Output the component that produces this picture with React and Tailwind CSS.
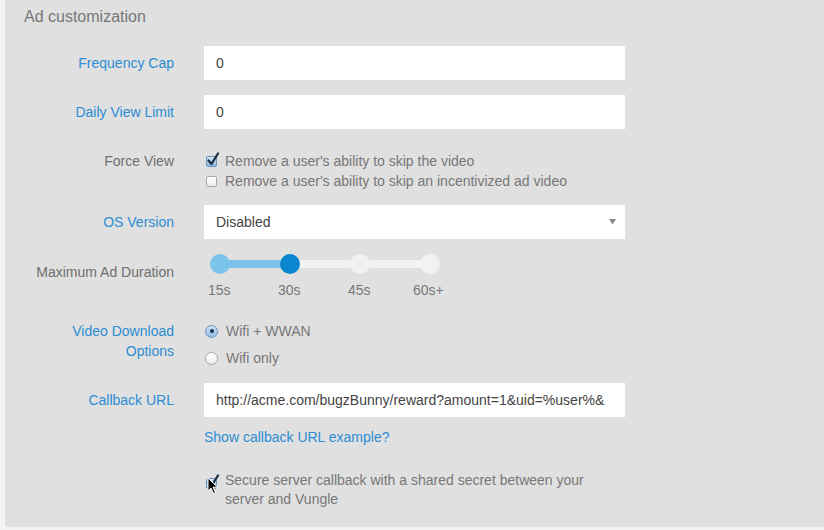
import { useState } from "react";

const font = "font-['Liberation_Sans',Arial,sans-serif]";

function Label({ children, blue, className = "" }) {
  return (
    <div
      className={`w-[169px] shrink-0 text-right text-[14px] leading-[20px] ${
        blue ? "text-[#2b8dd3]" : "text-[#6f6f6f]"
      } ${className}`}
    >
      {children}
    </div>
  );
}

function TextInput({ value }) {
  return (
    <div className="w-[421px] h-[34px] bg-white flex items-center px-3 text-[14px] text-[#444]">
      <span className="block w-full whitespace-nowrap">{value}</span>
    </div>
  );
}

function CheckBox({ checked }) {
  return (
    <span className="relative inline-block w-[11px] h-[11px] mr-[8px] shrink-0">
      <span
        className={`absolute inset-0 rounded-[2px] border ${
          checked
            ? "border-[#6d94bd] bg-gradient-to-b from-[#d3e6f8] to-[#8db8e6]"
            : "border-[#a9a9a9] bg-gradient-to-b from-white to-[#ececec]"
        }`}
      />
      {checked && (
        <svg className="absolute left-[1px] top-[-4px]" width="13" height="14" viewBox="0 0 13 14">
          <path d="M1.5 8.5 L4.5 12 L11 1.5" fill="none" stroke="#1d2c3f" strokeWidth="2.2" strokeLinecap="round" strokeLinejoin="round" />
        </svg>
      )}
    </span>
  );
}

function Radio({ checked }) {
  return (
    <span
      className={`inline-flex items-center justify-center w-[13px] h-[13px] rounded-full border mr-[8px] shrink-0 ${
        checked
          ? "border-[#6d94bd] bg-gradient-to-b from-[#cfe3f7] to-[#8db8e6]"
          : "border-[#a9a9a9] bg-gradient-to-b from-white to-[#ececec]"
      }`}
    >
      {checked && <span className="w-[4px] h-[4px] rounded-full bg-[#1d2c3f]" />}
    </span>
  );
}

function Slider() {
  const steps = ["15s", "30s", "45s", "60s+"];
  const value = 1;
  return (
    <div className="w-[240px]">
      <div className="relative h-[20px] ml-[6px] w-[230px]">
        <div className="absolute left-[10px] right-[10px] top-[6px] h-[8px] bg-[#f2f2f2]" />
        <div className="absolute left-[10px] top-[6px] h-[8px] w-[69px] bg-[#7cc3ea]" />
        <div className="absolute inset-0 flex justify-between">
          {steps.map((s, i) => (
            <span
              key={s}
              className={`w-[20px] h-[20px] rounded-full ${
                i === value ? "bg-[#0a86cf]" : i < value ? "bg-[#7cc3ea]" : "bg-[#f2f2f2]"
              }`}
            />
          ))}
        </div>
      </div>
      <div className="flex mt-[6px] pl-[4px] text-[14px] leading-[20px] text-[#777]">
        <span className="w-[70px]">15s</span>
        <span className="w-[70px]">30s</span>
        <span className="w-[65px]">45s</span>
        <span>60s+</span>
      </div>
    </div>
  );
}

export default function App() {
  const [secure] = useState(true);

  return (
    <div className={`w-[824px] h-[530px] bg-[#f3f3f3] overflow-hidden ${font}`}>
      <div className="ml-[5px] h-[527px] bg-[#e0e0e0] pt-[7px]">
        <h2 className="pl-[19px] text-[16px] leading-[20px] text-[#777]">
          Ad customization
        </h2>

        <div className="flex items-center gap-[30px] mt-[19px]">
          <Label blue>Frequency Cap</Label>
          <TextInput value="0" />
        </div>

        <div className="flex items-center gap-[30px] mt-[15px]">
          <Label blue>Daily View Limit</Label>
          <TextInput value="0" />
        </div>

        <div className="flex items-start gap-[30px] mt-[22px]">
          <Label>Force View</Label>
          <div className="text-[14px] leading-[20px] text-[#777]">
            <div className="flex items-center pl-[2px]">
              <CheckBox checked />
              Remove a user's ability to skip the video
            </div>
            <div className="flex items-center pl-[2px]">
              <CheckBox />
              Remove a user's ability to skip an incentivized ad video
            </div>
          </div>
        </div>

        <div className="flex items-center gap-[30px] mt-[14px]">
          <Label blue>OS Version</Label>
          <div className="w-[421px] h-[34px] bg-white flex items-center justify-between px-3 text-[14px] text-[#444]">
            <span>Disabled</span>
            <svg width="7" height="6" viewBox="0 0 7 6" className="mr-[-3px]">
              <path d="M0 0 H7 L3.5 5.5 Z" fill="#888" />
            </svg>
          </div>
        </div>

        <div className="flex items-start gap-[30px] mt-[15px]">
          <Label className="mt-[8px]">Maximum Ad Duration</Label>
          <Slider />
        </div>

        <div className="flex items-start gap-[30px] mt-[21px]">
          <Label blue>
            Video Download
            <br />
            Options
          </Label>
          <div className="text-[14px] text-[#777] pl-[1px]">
            <div className="flex items-center h-[20px]">
              <Radio checked />
              Wifi + WWAN
            </div>
            <div className="flex items-center h-[20px] mt-[7px]">
              <Radio />
              Wifi only
            </div>
          </div>
        </div>

        <div className="flex items-center gap-[30px] mt-[15px]">
          <Label blue>Callback URL</Label>
          <TextInput value="http://acme.com/bugzBunny/reward?amount=1&uid=%user%&" />
        </div>

        <div className="flex gap-[30px] mt-[10px]">
          <div className="w-[169px] shrink-0" />
          <a className="text-[14px] leading-[20px] text-[#2b8dd3]">Show callback URL example?</a>
        </div>

        <div className="flex gap-[30px] mt-[24px]">
          <div className="w-[169px] shrink-0" />
          <div className="relative flex items-start text-[14px] leading-[19px] text-[#777] w-[400px] pl-[2px]">
            <span className="mt-[4px]">
              <CheckBox checked={secure} />
            </span>
            <span>
              Secure server callback with a shared secret between your server and Vungle
            </span>
            <svg className="absolute left-[3px] top-[6px]" width="12" height="18" viewBox="0 0 12 18">
              <path d="M1 1 L1 14 L4 11 L6.5 16.5 L8.5 15.5 L6 10.2 L10.5 10.2 Z" fill="#000" stroke="#fff" strokeWidth="1" strokeLinejoin="round" />
            </svg>
          </div>
        </div>
      </div>
    </div>
  );
}
